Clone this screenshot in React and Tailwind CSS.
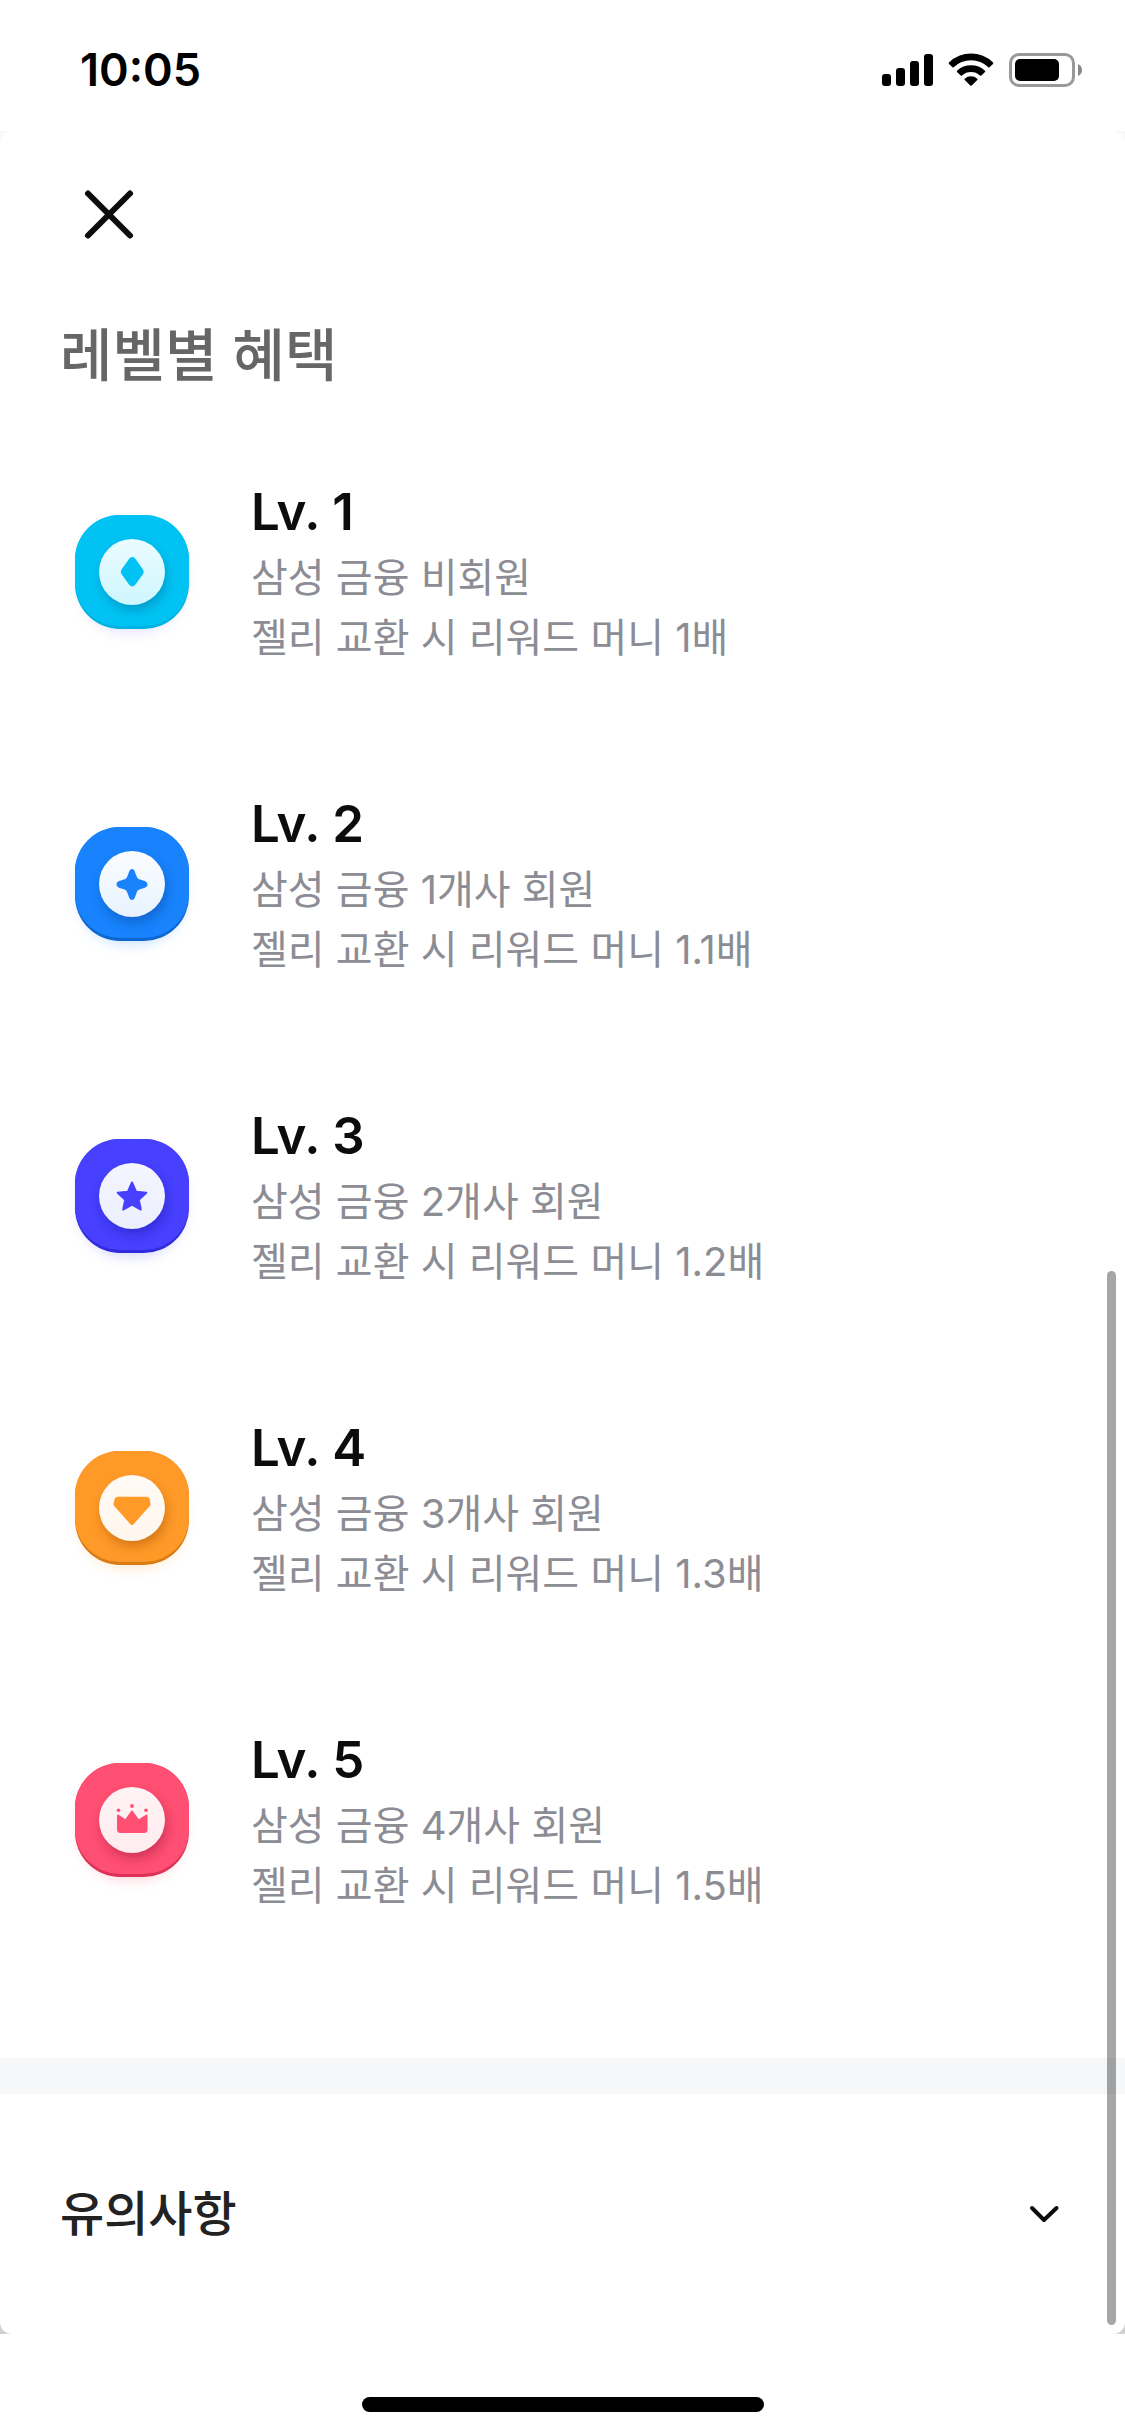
import { useState } from "react";

const levels = [
    { id: 1, member: "삼성 금융 비회원", rate: "1배", color: "#00c3f3", edge: "#00b3e2", top: "#ebfcff", bottom: "#cff6fe", shade: "#006f9c", glow: "#8f8cf0" },
    { id: 2, member: "삼성 금융 1개사 회원", rate: "1.1배", color: "#1883fc", edge: "#0d66d0", top: "#fafdff", bottom: "#e8f3ff", shade: "#0a3f9c", glow: "#1883fc" },
    { id: 3, member: "삼성 금융 2개사 회원", rate: "1.2배", color: "#4741ff", edge: "#3129dc", top: "#f4f5ff", bottom: "#eceffe", shade: "#1c12a8", glow: "#4741ff" },
    { id: 4, member: "삼성 금융 3개사 회원", rate: "1.3배", color: "#ff9a28", edge: "#d97a12", top: "#fffaf5", bottom: "#fff7ee", shade: "#a04e00", glow: "#ff9a28" },
    { id: 5, member: "삼성 금융 4개사 회원", rate: "1.5배", color: "#ff4f72", edge: "#dc2f56", top: "#fff3f5", bottom: "#ffecef", shade: "#99123a", glow: "#ff4f72" },
];

function LevelSymbol({ id }) {
    if (id === 1) return <path d="M71 61 Q72 59 74.300 59 Q76.500 59 77.500 61 L85 71.500 Q86.500 73.700 85 76 L77.500 86.500 Q74.300 90.500 71 86.500 L63.500 76 Q62 73.700 63.500 71.500 Z" />;
    if (id === 2) return <path d="M74 59 C77 59 77 63 78.500 66 C79.500 68.500 80 69 83 69.800 C87 71 89.500 72 89.500 74.500 C89.500 77 87 78 83 79 C80 79.800 79.500 80.500 78.500 83 C77 87 76.500 90 74 90 C71.500 90 71 87 69.500 83 C68.500 80.500 68 79.800 65 79 C61 78 58.500 77 58.500 74.500 C58.500 72 61 71 65 69.800 C68 69 68.500 68.500 69.500 66 C71 63 71 59 74 59 Z" />;
    if (id === 3) return <path strokeWidth="2" strokeLinejoin="round" stroke="currentColor" d="M74 60.500 L78.200 69.800 L88.300 70.700 L80.800 77.700 L82.800 87.500 L74 82.700 L65.200 87.500 L67.200 77.700 L59.700 70.700 L69.800 69.800 Z" />;
    if (id === 4) return <path strokeWidth="4" strokeLinejoin="round" stroke="currentColor" d="M60 64.700 H88 Q89.700 64.700 90 66.500 L90.500 70.500 L74 89 L57.500 70.500 L58.300 66.500 Q58.700 64.700 60 64.700 Z" />;
    return (
        <g>
            <path strokeWidth="2" strokeLinejoin="round" stroke="currentColor" d="M60 69.500 L67.500 74.500 L74 65.500 L80.500 74.500 L88.500 69.500 V83.500 Q88.500 86 86 86 H62.500 Q60 86 60 83.500 Z" />
            <circle cx="60.500" cy="64.300" r="1.800" />
            <circle cx="74" cy="60" r="1.900" />
            <circle cx="88" cy="64.300" r="1.800" />
        </g>
    );
}

function LevelBadge({ level }) {
    return (
        <svg viewBox="0 0 148 148" className="size-37 shrink-0" style={{ color: level.color }} aria-hidden="true">
            <defs>
                <linearGradient id={`disc${level.id}`} x1="0" y1="0" x2="0" y2="1">
                    <stop offset="0" stopColor={level.top} />
                    <stop offset="1" stopColor={level.bottom} />
                </linearGradient>
                <filter id={`blur${level.id}`} x="-30%" y="-30%" width="160%" height="160%">
                    <feGaussianBlur stdDeviation="6" />
                </filter>
            </defs>
            <rect x="21" y="25" width="106" height="110" rx="46" fill={level.glow} opacity="0.2" filter={`url(#blur${level.id})`} />
            <rect x="17" y="17" width="114" height="114" rx="45" fill={level.edge} />
            <path d="M62 17 H86 A45 44 0 0 1 131 61 V84 A45 44 0 0 1 86 128 H62 A45 44 0 0 1 17 84 V61 A45 44 0 0 1 62 17 Z" fill={level.color} />
            <circle cx="76" cy="80" r="32" fill={level.shade} opacity="0.5" filter={`url(#blur${level.id})`} />
            <circle cx="74" cy="74" r="33" fill={`url(#disc${level.id})`} />
            <g fill="currentColor"><LevelSymbol id={level.id} /></g>
        </svg>
    );
}

function StatusBar() {
    return (
        <div className="flex h-[131px] items-center justify-between pt-2 pr-[43px] pb-0 pl-20">
            <time className="text-[45px] leading-none font-semibold text-black">10:05</time>
            <div className="flex items-center gap-[15px]">
                <svg viewBox="0 0 51 32" className="h-8 w-[51px]" aria-hidden="true">
                    <rect x="0" y="20" width="9" height="12" rx="3" />
                    <rect x="14" y="14" width="9" height="18" rx="3" />
                    <rect x="28" y="7" width="9" height="25" rx="3" />
                    <rect x="42" y="0" width="9" height="32" rx="3" />
                </svg>
                <svg viewBox="0 0 46 33" className="h-[33px] w-[46px]" aria-hidden="true">
                    <path d="M1 9.500 A31.500 31.500 0 0 1 45 9.500 Q45.500 10.200 45 11 L41.500 14.300 Q41 14.700 40.300 14.200 A25 25 0 0 0 5.700 14.200 Q5 14.700 4.500 14.300 L1 11 Q0.500 10.200 1 9.500 Z" />
                    <path d="M9 17.700 A20.500 20.500 0 0 1 37 17.700 Q37.500 18.300 37 19 L33.300 22.600 Q32.700 23 32 22.500 A13.500 13.500 0 0 0 14 22.500 Q13.300 23 12.700 22.600 L9 19 Q8.500 18.300 9 17.700 Z" />
                    <path d="M16.700 25.700 A9.500 9.500 0 0 1 29.300 25.700 Q29.800 26.300 29.300 27 L23.700 32.500 Q23 33 22.300 32.500 L16.700 27 Q16.200 26.300 16.700 25.700 Z" />
                </svg>
                <svg viewBox="0 0 73 34" className="h-[34px] w-[73px]" aria-hidden="true">
                    <rect x="1.500" y="1.500" width="63" height="31" rx="8.500" fill="none" stroke="#999999" strokeWidth="3" />
                    <rect x="6" y="6" width="44" height="22" rx="5" />
                    <path d="M69 11 Q73 13 73 17 Q73 21 69 23 Z" fill="#888888" />
                </svg>
            </div>
        </div>
    );
}

export default function App() {
    const [open, setOpen] = useState(false);

    return (
        <div className="min-h-screen bg-white font-['Inter','Noto_Sans_CJK_KR',sans-serif]">
            <StatusBar />
            <div className="bg-linear-to-b from-[#f8f8f8] to-[#d0d0d0]">
                <main className="relative rounded-xl bg-white pt-12">
                    <button type="button" aria-label="닫기" className="ml-[73px] flex size-18 items-center justify-center">
                        <svg viewBox="0 0 72 72" className="size-18" fill="none" stroke="#0b0c0c" strokeWidth="6" strokeLinecap="round">
                            <path d="M15 14.500 L57 56.500 M57 14.500 L15 56.500" />
                        </svg>
                    </button>
                    <h1 className="mt-[63px] pl-15 text-[57px] leading-[84px] font-medium text-[#666666]">레벨별 혜택</h1>
                    <ul className="pt-[18px] pb-[82px]">
                        {levels.map((level) => (
                            <li key={level.id} className="flex h-[312px] items-center gap-[45px] pl-[58px]">
                                <LevelBadge level={level} />
                                <div className="text-[40px] leading-[60px] text-[#8b8c94]">
                                    <h2 className="text-[51px] leading-[72px] font-semibold text-[#0b0c0c]">Lv. {level.id}</h2>
                                    <p>{level.member}</p>
                                    <p>젤리 교환 시 리워드 머니 {level.rate}</p>
                                </div>
                            </li>
                        ))}
                    </ul>
                    <div className="h-9 bg-[#f5f7f9]" />
                    <button type="button" aria-expanded={open} onClick={() => setOpen(!open)} className="flex h-60 w-full items-center justify-between pr-14 pl-15 text-[48px] leading-[72px] font-medium text-[#222222]">
                        유의사항
                        <svg viewBox="0 0 48 48" className="size-12" fill="none" stroke="#0b0c0c" strokeWidth="4" strokeLinecap="round" strokeLinejoin="round">
                            <path d="M11 18 L23 30 L35.500 18" />
                        </svg>
                    </button>
                    <div className="absolute right-[9px] bottom-[9px] h-[1054px] w-[9px] rounded-full bg-black/35" />
                </main>
            </div>
            <div className="flex justify-center pt-[63px] pb-6">
                <div className="h-[15px] w-[402px] rounded-full bg-black" />
            </div>
        </div>
    );
}
